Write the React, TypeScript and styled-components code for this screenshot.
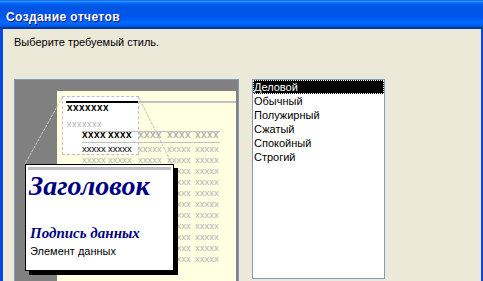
import React from 'react';
import styled, { createGlobalStyle } from 'styled-components';

const Global = createGlobalStyle`
  html, body { margin: 0; padding: 0; overflow: hidden; background: #ECE9D8; }
  #root { width: 483px; height: 281px; }
`;

const Window = styled.div`
  width: 483px;
  height: 281px;
  display: flex;
  flex-direction: column;
  overflow: hidden;
  background: #ECE9D8;
`;

const TitleBar = styled.div`
  flex: none;
  height: 29px;
  box-sizing: border-box;
  padding: 5px 0 0 6px;
  line-height: 24px;
  color: #fff;
  font-family: "Liberation Sans", Arial, sans-serif;
  font-weight: bold;
  font-size: 12px;
  letter-spacing: 0.4px;
  text-shadow: 1px 1px 0 #0A1A8A;
  background: linear-gradient(
    to bottom,
    #0058ee 0%, #3593ff 4%, #288eff 6%, #127dff 8%, #036ffc 10%,
    #0262ee 14%, #0057e5 20%, #0054e3 24%, #0055eb 56%, #005bf5 66%,
    #026afe 76%, #0062ef 86%, #0052d6 92%, #0040ab 94%, #003092 100%
  );
`;

const Body = styled.div`
  flex: 1;
  display: flex;
  flex-direction: column;
  min-height: 0;
  border-left: 3px solid #0847E6;
  border-right: 2px solid #0847E6;
  padding: 7px 0 0 9px;
  font-family: "Liberation Sans", Arial, sans-serif;
  font-size: 11px;
  color: #000;
`;

const Prompt = styled.div`
  line-height: 13px;
  padding-left: 2px;
`;

const Row = styled.div`
  display: flex;
  gap: 13px;
  margin: 30px 0 0 2px;
  align-items: flex-start;
`;

const Preview = styled.div`
  position: relative;
  flex: none;
  width: 225px;
  height: 212px;
  box-sizing: border-box;
  border: 1px solid #7F9DB9;
  background: #808080;
  padding: 11px 2px 0 42px;
  overflow: hidden;
`;

const Paper = styled.div`
  position: relative;
  height: 100%;
  background: #FFFFE1;
  padding-top: 10px;
  box-sizing: border-box;
`;

const FocusFrame = styled.div`
  position: absolute;
  left: 5px;
  top: 5px;
  width: 77px;
  height: 59px;
  box-sizing: border-box;
  background: #fff;
  border: 1px dashed #C0C0C0;
`;

const PaperContent = styled.div`
  position: relative;
`;

const Rule = styled.div`
  display: flex;
  height: 2px;
  margin-left: 9px;
`;

const RuleSegment = styled.div<{ $dark?: boolean; $w?: number }>`
  height: 2px;
  background: ${p => (p.$dark ? '#000' : '#C0C0C0')};
  ${p => (p.$w ? `width: ${p.$w}px;` : 'flex: 1;')}
`;

const ReportTitle = styled.div`
  margin-left: 10px;
  font-weight: bold;
  font-size: 10px;
  line-height: 10px;
  letter-spacing: 0.45px;
`;

const ReportSub = styled.div`
  margin: 7px 0 0 10px;
  font-size: 9px;
  line-height: 9px;
  letter-spacing: 0.5px;
  color: #B4B4B4;
`;

const Cells = styled.div`
  display: grid;
  grid-template-columns: 26px 30px 29px 28px 25px;
  width: 138px;
  margin-left: 25px;
`;

const GroupHeader = styled(Cells)`
  margin-top: 2px;
  height: 10px;
  border-top: 1px solid #C0C0C0;
  border-bottom: 1px solid #C0C0C0;
  line-height: 6px;
`;

const DetailRow = styled(Cells)`
  height: 11px;
  line-height: 11px;
`;

const Cell = styled.span<{ $dark?: boolean; $bold?: boolean }>`
  font-size: ${p => (p.$bold ? '10px' : '9.5px')};
  white-space: nowrap;
  font-weight: ${p => (p.$bold ? 'bold' : 'normal')};
  letter-spacing: ${p => (p.$bold ? '0.45px' : '0')};
  color: ${p => (p.$dark ? '#000' : '#B4B4B4')};
`;

const Leaders = styled.svg`
  position: absolute;
  left: 0;
  top: 0;
  width: 223px;
  height: 211px;
  pointer-events: none;
`;

const Callout = styled.div`
  position: absolute;
  left: 10px;
  top: 84px;
  width: 149px;
  height: 107px;
  box-sizing: border-box;
  border: 1px solid #000;
  background: #fff;
  box-shadow: 4px 4px 0 #000;
  display: flex;
  flex-direction: column;
`;

const CalloutBar = styled.div`
  height: 3px;
  margin: 2px 2px 0;
  background: #C0C0C0;
`;

const Heading = styled.div`
  margin-top: 2px;
  padding-left: 3px;
  font-family: "Liberation Serif", "Times New Roman", serif;
  font-style: italic;
  font-weight: bold;
  font-size: 28px;
  line-height: 28px;
  color: #000080;
`;

const Caption = styled.div`
  margin-top: 26px;
  padding-left: 4px;
  font-family: "Liberation Serif", "Times New Roman", serif;
  font-style: italic;
  font-weight: bold;
  font-size: 15px;
  line-height: 15px;
  color: #000080;
`;

const Field = styled.div`
  margin-top: 4px;
  padding-left: 4px;
  font-size: 11px;
  line-height: 13px;
`;

const ListBox = styled.div`
  flex: none;
  width: 133px;
  height: 200px;
  box-sizing: border-box;
  border: 1px solid #7F9DB9;
  background: #fff;
`;

const ListItem = styled.div<{ $selected?: boolean }>`
  height: 14px;
  line-height: 14px;
  padding-left: 1px;
  background: ${p => (p.$selected ? '#000' : 'transparent')};
  color: ${p => (p.$selected ? '#fff' : '#000')};
  outline: ${p => (p.$selected ? '1px dotted #fff' : 'none')};
  outline-offset: -1px;
`;

const styles = ['Деловой', 'Обычный', 'Полужирный', 'Сжатый', 'Спокойный', 'Строгий'];

const detailRows = Array.from({ length: 11 }, (_, i) => i);

export default function App() {
  return (
    <>
      <Global />
      <Window>
        <TitleBar>Создание отчетов</TitleBar>
        <Body>
          <Prompt>Выберите требуемый стиль.</Prompt>
          <Row>
            <Preview>
              <Paper>
                <FocusFrame />
                <PaperContent>
                  <Rule>
                    <RuleSegment $dark $w={72} />
                    <RuleSegment />
                  </Rule>
                  <ReportTitle>xxxxxxx</ReportTitle>
                  <ReportSub>xxxxxxx</ReportSub>
                  <GroupHeader>
                    <Cell $dark $bold>xxxx</Cell>
                    <Cell $dark $bold>xxxx</Cell>
                    <Cell $bold>xxxx</Cell>
                    <Cell $bold>xxxx</Cell>
                    <Cell $bold>xxxx</Cell>
                  </GroupHeader>
                  {detailRows.map(i => (
                    <DetailRow key={i}>
                      <Cell $dark={i === 0}>xxxxx</Cell>
                      <Cell $dark={i === 0}>xxxxx</Cell>
                      <Cell>xxxxx</Cell>
                      <Cell>xxxxx</Cell>
                      <Cell>xxxxx</Cell>
                    </DetailRow>
                  ))}
                </PaperContent>
              </Paper>
              <Leaders viewBox="0 0 223 211">
                <line x1="47.5" y1="17" x2="10" y2="84" stroke="#C8C8C8" strokeWidth="1" strokeDasharray="3 1" />
                <line x1="123.5" y1="17" x2="157" y2="84" stroke="#C0C0C0" strokeWidth="1" strokeDasharray="3 1" />
              </Leaders>
              <Callout>
                <CalloutBar />
                <Heading>Заголовок</Heading>
                <Caption>Подпись данных</Caption>
                <Field>Элемент данных</Field>
              </Callout>
            </Preview>
            <ListBox>
              {styles.map((s, i) => (
                <ListItem key={s} $selected={i === 0}>{s}</ListItem>
              ))}
            </ListBox>
          </Row>
        </Body>
      </Window>
    </>
  );
}
